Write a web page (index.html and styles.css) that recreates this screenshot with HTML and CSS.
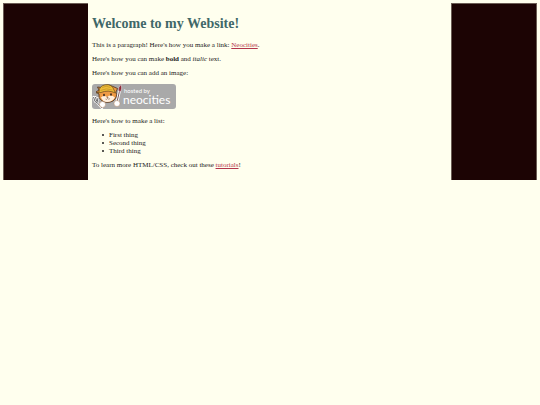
FILE: index.html
```html
<!DOCTYPE html>
<html lang="en">
<head>
<meta charset="utf-8">
<title>Welcome to my Website!</title>
<link rel="stylesheet" href="styles.css">
</head>
<body>
<div class="page">
  <main class="content">
    <h1>Welcome to my Website!</h1>
    <p>This is a paragraph! Here's how you make a link: <a href="#neocities">Neocities</a>.</p>
    <p>Here's how you can make <strong>bold</strong> and <em>italic</em> text.</p>
    <p>Here's how you can add an image:</p>
    <svg class="badge" viewBox="0 0 84 25" role="img" aria-label="Hosted by Neocities">
      <rect width="84" height="25" rx="3" fill="#a9a9a9"/>
      <!-- fork -->
      <path d="M1.5 13L3 17.5L5 18.5L6 14M3.5 13L4.5 17M5 18.5L10 24" fill="none" stroke="#fff" stroke-width="2.2" stroke-linecap="round"/>
      <path d="M1.5 13L3 17.5L5 18.5L6 14M3.5 13L4.5 17M5 18.5L10 24" fill="none" stroke="#555" stroke-width=".9"/>
      <!-- brush -->
      <path d="M27.5 7L25 18" stroke="#fff" stroke-width="2.8"/>
      <path d="M27.5 7L25 18" stroke="#78595b" stroke-width="1"/>
      <path d="M26.5 7Q26 3 29 .5Q30.5 4 28.8 7.5Z" fill="#8d2635" stroke="#eee" stroke-width=".5"/>
      <!-- cat -->
      <path d="M7 6L5.5 3L9.5 3.5Q15-1 21 2.5L25.5 4.5L24 8Q26 13 21 17Q15 20 9.5 16.5Q6 14 7 10L4 8Z" fill="#ef9b45" stroke="#49301f" stroke-width=".8"/>
      <path d="M9 13.5Q12 11 15 13Q19 10 23 13.5Q20 18 15 18Q11 18 9 13.5Z" fill="#fff0df"/>
      <path d="M7 8Q7 2 13 .8Q20-.5 22.5 7L23.5 9Q16 5.5 9 8.5L4.5 9Z" fill="#eebd38" stroke="#66491d" stroke-width=".7"/>
      <path d="M10 3.5Q14 1 18.5 3.5M8.5 6.5Q14 3.5 20.5 6" fill="none" stroke="#b98a24" stroke-width=".6"/>
      <ellipse cx="12" cy="11" rx=".8" ry="1.2" fill="#2a201c"/>
      <ellipse cx="19" cy="10.5" rx=".8" ry="1.2" fill="#2a201c"/>
      <path d="M14.8 13L16.2 13L15.5 14ZM13.5 15Q15 16 15.5 14.5Q17 16 18 14.5" fill="none" stroke="#6b4028" stroke-width=".5"/>
      <circle cx="10.5" cy="20.5" r="3" fill="#fff" stroke="#b98a66" stroke-width=".5"/>
      <circle cx="25" cy="19.5" r="3" fill="#fff" stroke="#b98a66" stroke-width=".5"/>
      <text class="badge-small" x="32" y="9">hosted by</text>
      <text class="badge-name" x="31" y="20">neocities</text>
    </svg>
    <p>Here's how to make a list:</p>
    <ul>
      <li>First thing</li>
      <li>Second thing</li>
      <li>Third thing</li>
    </ul>
    <p>To learn more HTML/CSS, check out these <a href="#tutorials">tutorials</a>!</p>
  </main>
</div>
</body>
</html>
```
FILE: styles.css
```css
body {
  margin: 3px;
  background: #ffffee;
  color: #222;
  font: 7px/8px "Liberation Serif", serif;
}

.page {
  padding: 0 84px;
  border: 1px solid #6b5d55;
  border-bottom: 0;
  background: #1c0404;
}

.content {
  margin-top: -1px;
  padding: 13px 4px 11px;
  border-right: 1px solid #6b5d55;
  background: #ffffee;
}

h1 {
  margin: 0 0 9px;
  color: #3f6868;
  font-size: 14px;
  line-height: 16px;
}

p {
  margin: 0 0 6px;
}

p:last-child {
  margin-bottom: 0;
}

a {
  color: #b3364c;
}

.badge {
  display: block;
  width: 84px;
  height: 25px;
  margin: 7px 0 8px;
}

.badge-small,
.badge-name {
  fill: #fff;
  font-family: Lato, sans-serif;
}

.badge-small {
  font-size: 6px;
}

.badge-name {
  font-size: 12px;
}

ul {
  margin: 0 0 6px;
  padding-left: 10px;
  list-style: none;
}

li {
  display: flex;
  align-items: center;
  gap: 5px;
}

li::before {
  content: "";
  width: 2px;
  height: 2px;
  border-radius: 50%;
  background: #222;
}
```
